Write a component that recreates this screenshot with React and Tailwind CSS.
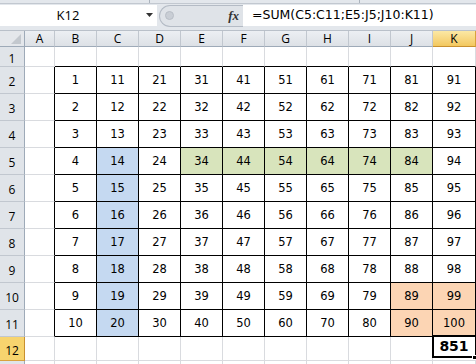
import React from 'react';

const COLS = ['A', 'B', 'C', 'D', 'E', 'F', 'G', 'H', 'I', 'J', 'K'];
const ROWS = [1, 2, 3, 4, 5, 6, 7, 8, 9, 10, 11, 12];

const fillFor = (c, r) => {
  if (c === 2 && r >= 5) return 'bg-[#c5d9f1]';
  if (r === 5 && c >= 4 && c <= 9) return 'bg-[#d8e4bc]';
  if (c >= 9 && r >= 10 && r <= 11) return 'bg-[#fcd5b4]';
  return 'bg-white';
};

const Cell = ({ c, r }) => {
  // c: 0 = A ... 10 = K
  const inTable = c >= 1 && r >= 2 && r <= 11;
  const rightBlack = (inTable) || (c === 0 && r >= 2 && r <= 11);
  const bottomBlack = inTable || (r === 1 && c >= 1);
  const value = inTable ? (c - 1) * 10 + (r - 1) : null;
  const selected = c === 10 && r === 12;

  return (
    <div
      className={`relative flex items-center justify-center pt-[2px] border-r border-b ${
        rightBlack ? 'border-r-black' : 'border-r-[#d9dbdf]'
      } ${bottomBlack ? 'border-b-black' : 'border-b-[#d9dbdf]'} ${inTable ? fillFor(c, r) : 'bg-white'}`}
    >
      {value !== null && <span>{value}</span>}
      {selected && (
        <>
          <div className="absolute -top-[2px] -left-[1px] -right-[2px] bottom-[2px] border-2 border-black flex items-center justify-center">
            <span className="font-bold text-[14px] pr-[1px]">851</span>
          </div>
          <div className="absolute right-[-2px] bottom-[0px] w-[5px] h-[5px] bg-black border border-white" />
        </>
      )}
    </div>
  );
};

export default function App() {
  return (
    <div
      className="w-[476px] h-[364px] overflow-hidden bg-white text-black"
      style={{ fontFamily: '"DejaVu Sans", Tahoma, sans-serif' }}
    >
      {/* ribbon edge */}
      <div className="h-[3px] bg-[#e3e7ec] flex">
        <div className="w-[150px] border-r border-[#aab2bc]" />
        <div className="w-[210px] border-r border-[#aab2bc]" />
      </div>

      {/* formula bar */}
      <div className="h-[24px] bg-[#e3e7ec] border-t border-[#c2c8d0] flex items-center">
        <div className="w-[157px] h-[21px] bg-white flex items-center relative">
          <span
            className="w-[136px] text-center text-[13px]"
            style={{ fontFamily: '"Open Sans", "Liberation Sans", sans-serif' }}
          >
            K12
          </span>
          <svg className="absolute left-[146px] top-[8px]" width="7" height="4" viewBox="0 0 7 4">
            <path d="M0 0 H7 L3.5 4 Z" fill="#333" />
          </svg>
        </div>
        <div className="w-[84px] h-[22px] ml-[2px] rounded-l-full bg-[#dfe3e8] border border-r-0 border-[#b4bbc5] flex items-center">
          <div className="ml-[5px] w-[9px] h-[9px] rounded-full bg-[#c9ced5] border border-[#b8bec6]" />
          <span
            className="ml-auto mr-[4px] text-[13px] italic font-bold text-[#333]"
            style={{ fontFamily: '"Liberation Serif", serif' }}
          >
            fx
          </span>
        </div>
        <div className="flex-1 h-[21px] bg-white flex items-center pl-[9px] text-[12.5px]">
          =SUM(C5:C11;E5:J5;J10:K11)
        </div>
      </div>

      <div className="h-[4px] bg-[#e3e7ec] border-b border-[#b9c0c9]" />

      {/* sheet */}
      <div
        className="grid grid-cols-[25px_30px_repeat(9,42px)_43px] grid-rows-[16px_20px_repeat(10,27px)_24px_6px] text-[11.5px]"
      >
        {/* corner */}
        <div className="bg-[#e4e7eb] border-r border-b border-[#9eaab8] relative">
          <svg className="absolute right-[3px] bottom-[2px]" width="10" height="10" viewBox="0 0 10 10">
            <path d="M10 0 V10 H0 Z" fill="#c3c8ce" />
          </svg>
        </div>
        {COLS.map((col, i) => (
          <div
            key={col}
            className={`flex items-center justify-center text-[12px] border-r border-b ${
              i === 10
                ? 'bg-gradient-to-b from-[#fbe8a4] to-[#f3c85e] border-r-[#d9a23c] border-b-[#c8902f]'
                : 'bg-gradient-to-b from-[#eceff3] to-[#dde1e6] border-r-[#c1c7cf] border-b-[#9eaab8]'
            }`}
            style={{ fontFamily: '"Open Sans", "Liberation Sans", sans-serif' }}
          >
            {col}
          </div>
        ))}

        {ROWS.map((r) => (
          <React.Fragment key={r}>
            <div
              className={`flex items-center justify-center pt-[4px] text-[12px] border-r border-b ${
                r === 12
                  ? 'bg-[#f7d46e] border-r-[#c8902f] border-b-[#d9a23c]'
                  : 'bg-[#e0e4e9] border-r-[#9eaab8] border-b-[#c1c7cf]'
              }`}
              style={{ fontFamily: '"Open Sans", "Liberation Sans", sans-serif' }}
            >
              {r}
            </div>
            {COLS.map((col, c) => (
              <Cell key={col} c={c} r={r} />
            ))}
          </React.Fragment>
        ))}

        {/* row 13 sliver */}
        <div className="bg-[#e0e4e9] border-r border-[#9eaab8]" />
        {COLS.map((col) => (
          <div key={col} className="bg-white border-r border-[#d9dbdf]" />
        ))}
      </div>
    </div>
  );
}
